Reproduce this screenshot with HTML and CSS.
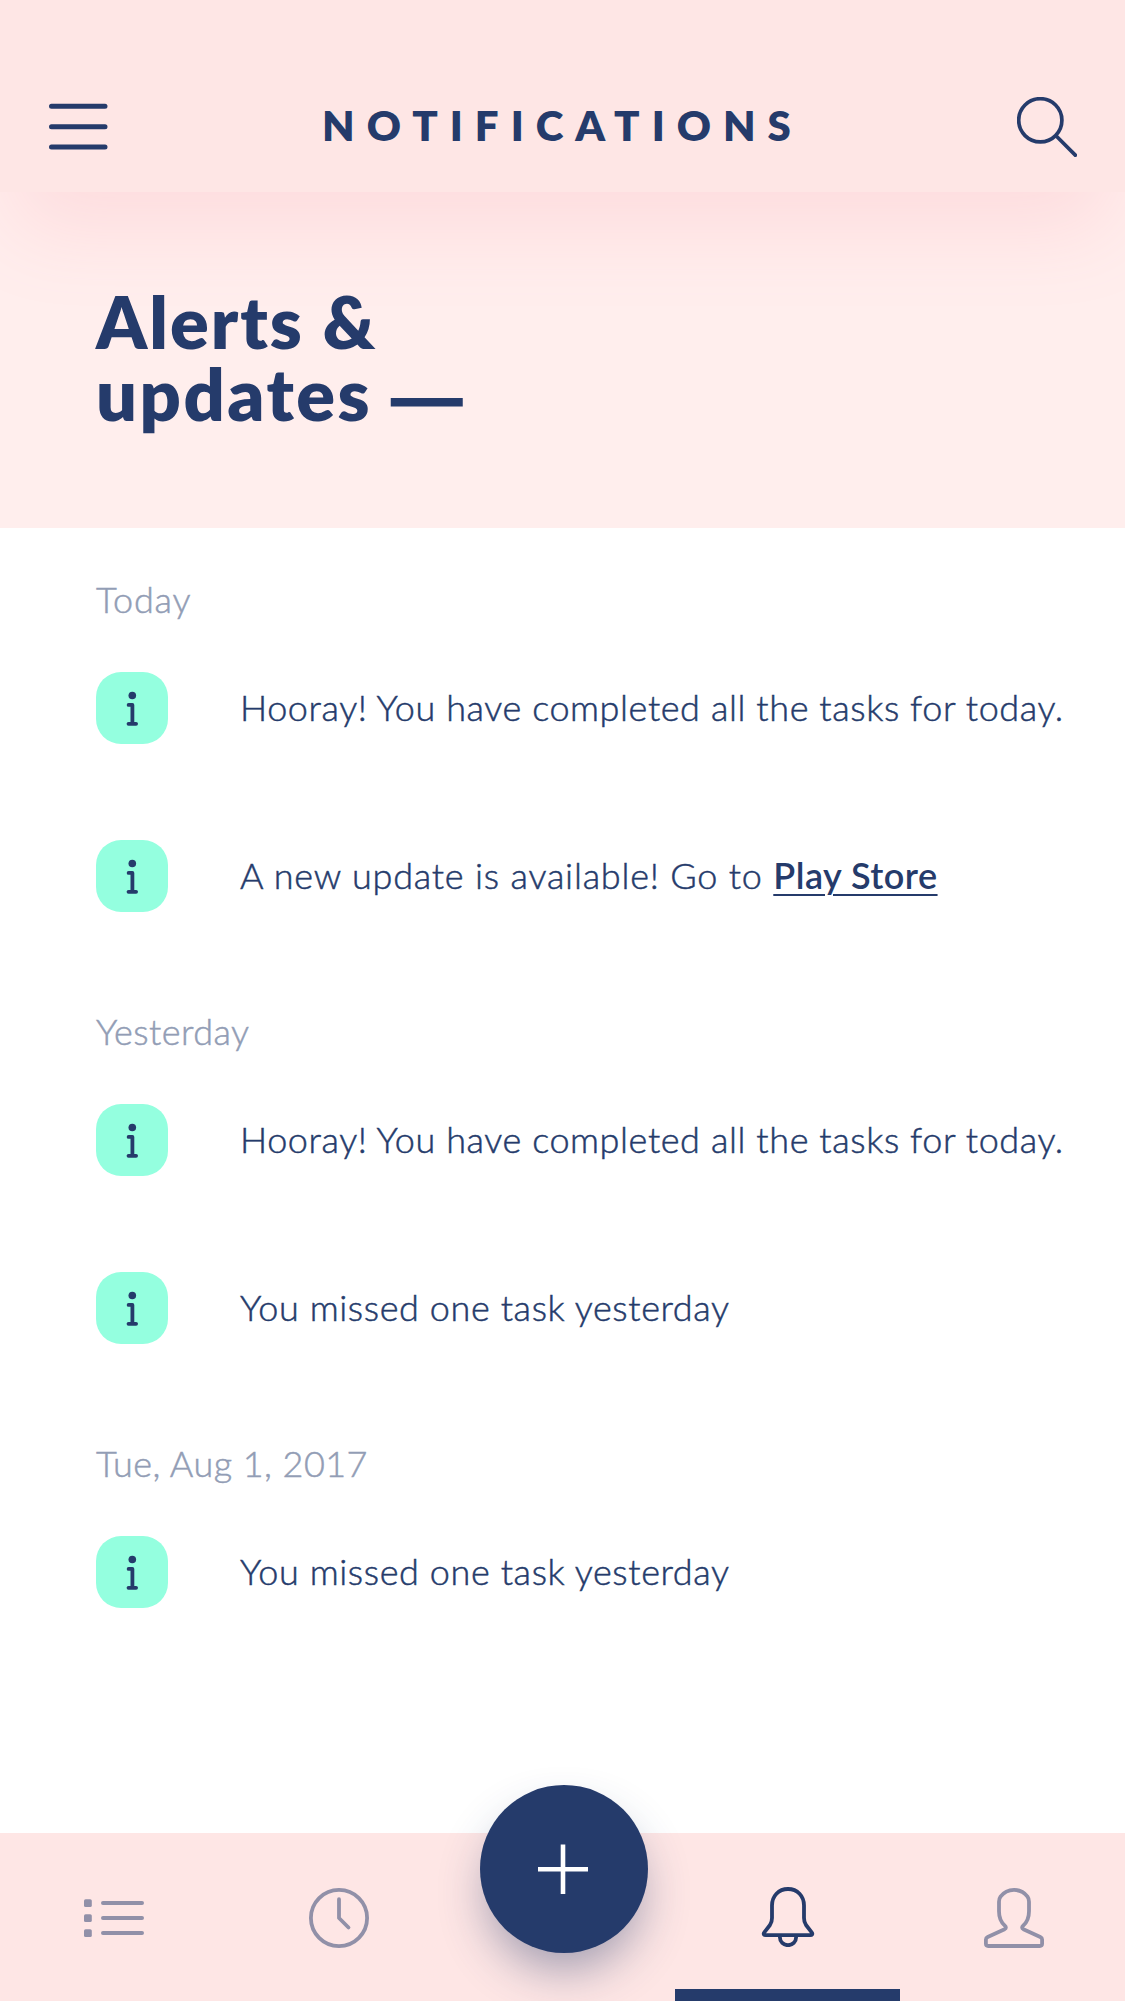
FILE: index.html
```html
<!DOCTYPE html>
<html lang="en">
<head>
<meta charset="utf-8">
<title>Notifications</title>
<link rel="stylesheet" href="styles.css">
</head>
<body>
<svg class="defs" aria-hidden="true">
  <symbol id="info" viewBox="0 0 72 72">
    <circle cx="36.3" cy="23.5" r="3.8" fill="currentColor"/>
    <path d="M32.6 32.9H36.4V51.8M32.5 51.8H40.1" fill="none" stroke="currentColor" stroke-width="3.8" stroke-linecap="round" stroke-linejoin="round"/>
  </symbol>
</svg>
<div class="screen">
  <header class="header">
    <button class="icon-button" aria-label="Menu">
      <svg width="60" height="60" viewBox="0 0 60 60" fill="none" stroke="currentColor" stroke-width="5" stroke-linecap="round"><path d="M3.5 9.2H57M3.5 29.7H57M3.5 50H57"/></svg>
    </button>
    <h1 class="title">NOTIFICATIONS</h1>
    <button class="icon-button" aria-label="Search">
      <svg width="60" height="60" viewBox="0 0 60 60" fill="none" stroke="currentColor" stroke-width="3.7" stroke-linecap="round"><circle cx="23.3" cy="23.3" r="21.6"/><path d="M39.5 39.3L58.3 58.1"/></svg>
    </button>
  </header>
  <section class="hero">
    <h2 class="hero-title"><span class="line-one">Alerts &amp;</span><br><span class="line-two">updates</span> <span class="dash">—</span></h2>
  </section>
  <main class="feed">
    <section class="day">
      <h3 class="day-label label-today">Today</h3>
      <article class="item"><svg class="badge"><use href="#info"/></svg><p class="text text-hooray">Hooray! You have completed all the tasks for today.</p></article>
      <article class="item"><svg class="badge"><use href="#info"/></svg><p class="text text-update">A new update is available! Go to <a class="link" href="#">Play Store</a></p></article>
    </section>
    <section class="day">
      <h3 class="day-label">Yesterday</h3>
      <article class="item"><svg class="badge"><use href="#info"/></svg><p class="text text-hooray">Hooray! You have completed all the tasks for today.</p></article>
      <article class="item"><svg class="badge"><use href="#info"/></svg><p class="text">You missed one task yesterday</p></article>
    </section>
    <section class="day">
      <h3 class="day-label">Tue, Aug 1, 2017</h3>
      <article class="item"><svg class="badge"><use href="#info"/></svg><p class="text">You missed one task yesterday</p></article>
    </section>
  </main>
  <nav class="tabs">
    <a class="tab" href="#" aria-label="Tasks">
      <svg width="60" height="60" viewBox="0 0 60 60" fill="none" stroke="currentColor" stroke-width="4" stroke-linecap="round"><g fill="currentColor" stroke="none"><rect y="11.2" width="7.8" height="7.8" rx="1.6"/><rect y="26.2" width="7.8" height="7.8" rx="1.6"/><rect y="41.2" width="7.8" height="7.8" rx="1.6"/></g><path d="M19 15H58M19 30H58M19 45H58"/></svg>
    </a>
    <a class="tab" href="#" aria-label="History">
      <svg width="60" height="60" viewBox="0 0 60 60" fill="none" stroke="currentColor" stroke-width="3.8" stroke-linecap="round" stroke-linejoin="round"><circle cx="30" cy="30" r="28.1"/><path d="M30 11.2V30L39.5 39.5"/></svg>
    </a>
    <div class="tab add-slot">
      <button class="add" aria-label="Add">
        <svg width="52" height="52" viewBox="0 0 52 52" fill="none" stroke="currentColor" stroke-width="4.6"><path d="M25 1.5V51M0 26.3H50"/></svg>
      </button>
    </div>
    <a class="tab active" href="#" aria-label="Notifications">
      <svg width="60" height="60" viewBox="0 0 60 60" fill="none" stroke="currentColor" stroke-width="3.8" stroke-linecap="round" stroke-linejoin="round"><path d="M30 2C20.5 2 14 9.2 14 18.5V31C14 34.2 13.4 36 12 38L6.3 45.3C5 47 6 48.2 7.8 48.2H52.2C54 48.2 55 47 53.7 45.3L48 38C46.6 36 46 34.2 46 31V18.5C46 9.2 39.5 2 30 2Z"/><path d="M21.9 49V50.2C21.9 54.7 25.4 58.2 30 58.2S38.1 54.7 38.1 50.2V49"/></svg>
    </a>
    <a class="tab" href="#" aria-label="Profile">
      <svg width="60" height="60" viewBox="0 0 60 60" fill="none" stroke="currentColor" stroke-width="3.8" stroke-linecap="round" stroke-linejoin="round"><path d="M30 1.9C24.3 1.9 19.3 4.9 16.5 8.7C15.2 10.5 15 11.8 15 13.8V23.3C15 29.1 17 34.3 20.8 37.7C22.3 39.1 22.2 40.3 20.6 41.2L3.7 49C2.4 49.6 1.9 50.2 1.9 51.6V55.6C1.9 57.2 2.6 58 4.2 58H55.8C57.4 58 58.1 57.2 58.1 55.6V51.6C58.1 50.2 57.6 49.6 56.3 49L39.4 41.2C37.8 40.3 37.7 39.1 39.2 37.7C43 34.3 45 29.1 45 23.3V13.8C45 11.8 44.8 10.5 43.5 8.7C40.7 4.9 35.7 1.9 30 1.9Z"/></svg>
    </a>
  </nav>
</div>
</body>
</html>
```
FILE: styles.css
```css
:root {
  --navy: #253b6b;
  --pink: #fee6e5;
  --blush: #ffeeed;
  --mint: #94ffdf;
}

* { box-sizing: border-box; }

body {
  margin: 0;
  background: #fff;
  color: var(--navy);
  font-family: Lato, "Open Sans", sans-serif;
}

h1, h2, h3, p { margin: 0; }

button {
  padding: 0;
  border: 0;
  background: none;
  color: inherit;
}

svg { display: block; }

.defs { display: none; }

.screen {
  display: flex;
  flex-direction: column;
  height: 2001px;
  overflow: hidden;
}

.header {
  position: relative;
  display: flex;
  align-items: flex-end;
  justify-content: space-between;
  height: 192px;
  padding: 0 48px 35px;
  background: var(--pink);
  box-shadow: 0 52px 84px -14px #fedcde;
}

.title {
  margin-bottom: 7px;
  font-size: 42px;
  font-weight: 800;
  line-height: 50px;
  letter-spacing: 12px;
}

.hero {
  height: 336px;
  padding: 93px 96px 0;
  background: var(--blush);
}

.hero-title {
  position: relative;
  font-size: 72px;
  font-weight: 800;
  line-height: 72px;
  white-space: nowrap;
}

.line-one { letter-spacing: 2px; }

.line-two { letter-spacing: 2.5px; }

.dash {
  margin-left: 2px;
  font-family: Inter, sans-serif;
  font-weight: 700;
  line-height: 0;
  vertical-align: -3px;
}

.feed {
  display: flex;
  flex: 1;
  flex-direction: column;
  gap: 96px;
  padding: 48px 0 0 96px;
}

.day {
  display: flex;
  flex-direction: column;
  gap: 96px;
}

.day-label {
  height: 48px;
  margin-bottom: -48px;
  padding-top: 1px;
  color: #929db5;
  font-size: 36px;
  font-weight: 300;
  line-height: 44px;
  letter-spacing: 0.45px;
  -webkit-text-stroke: 0.5px currentColor;
}

.label-today { letter-spacing: 0.75px; }

.item {
  display: flex;
  align-items: center;
  gap: 72px;
  height: 72px;
}

.badge {
  width: 72px;
  height: 72px;
  border-radius: 25px;
  background: var(--mint);
}

.text {
  padding-bottom: 2px;
  font-size: 36px;
  font-weight: 300;
  line-height: 44px;
  letter-spacing: 0.6px;
  white-space: nowrap;
  -webkit-text-stroke: 0.5px currentColor;
}

.text-hooray { letter-spacing: 0.584px; }

.text-update { letter-spacing: 0.79px; }

.link {
  color: inherit;
  font-weight: 600;
  letter-spacing: 0.5px;
  text-decoration-thickness: 2px;
  text-underline-offset: 5px;
  -webkit-text-stroke: 0;
}

.tabs {
  display: grid;
  grid-template-columns: repeat(5, 1fr);
  height: 168px;
  background: var(--pink);
}

.tab {
  display: flex;
  align-items: center;
  justify-content: center;
  padding: 1px 0 0 3px;
  color: #9190a8;
}

.tab.active {
  border-bottom: 12px solid var(--navy);
  padding: 12px 0 0 1px;
  color: var(--navy);
}

.tab.add-slot {
  align-items: flex-start;
  padding-top: 0;
}

.add {
  display: flex;
  flex: none;
  align-items: center;
  justify-content: center;
  width: 168px;
  height: 168px;
  margin-top: -48px;
  border-radius: 50%;
  background: var(--navy);
  box-shadow: 0 24px 48px -8px rgba(37, 59, 107, 0.44);
  color: #fff;
}
```
